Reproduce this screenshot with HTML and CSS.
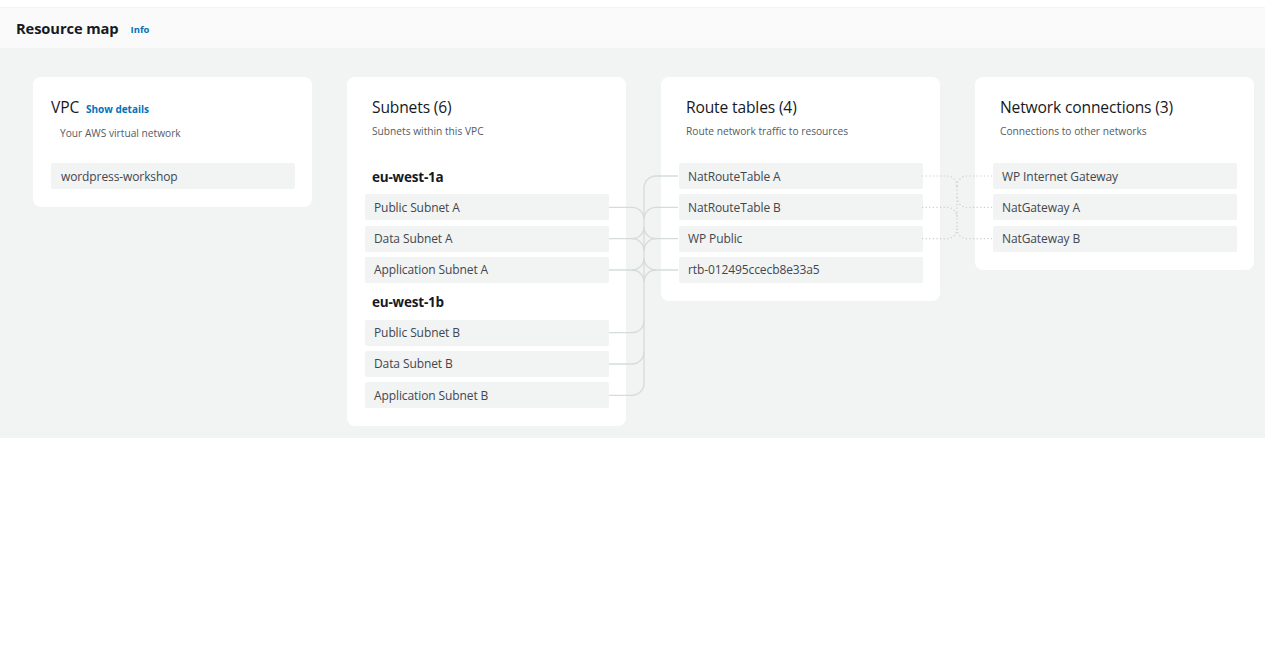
FILE: index.html
```html
<!DOCTYPE html>
<html lang="en">
<head>
<meta charset="utf-8">
<title>Resource map</title>
<link rel="stylesheet" href="styles.css">
</head>
<body>
<div class="top-strip"></div>
<header class="map-header">
  <h2 class="map-title">Resource map</h2>
  <a class="info-link" href="#">Info</a>
</header>
<section class="map">
  <div class="card card-vpc">
    <div class="card-head head-vpc">
      <div class="card-title">VPC <a class="details-link" href="#">Show details</a></div>
      <div class="card-sub">Your AWS virtual network</div>
    </div>
    <ul class="rows">
      <li class="row row-vpc">wordpress-workshop</li>
    </ul>
  </div>

  <div class="card">
    <div class="card-head">
      <div class="card-title">Subnets (6)</div>
      <div class="card-sub">Subnets within this VPC</div>
    </div>
    <ul class="rows">
      <li class="zone">eu-west-1a</li>
      <li class="row">Public Subnet A</li>
      <li class="row">Data Subnet A</li>
      <li class="row">Application Subnet A</li>
      <li class="zone">eu-west-1b</li>
      <li class="row">Public Subnet B</li>
      <li class="row">Data Subnet B</li>
      <li class="row">Application Subnet B</li>
    </ul>
  </div>

  <div class="card">
    <div class="card-head">
      <div class="card-title">Route tables (4)</div>
      <div class="card-sub">Route network traffic to resources</div>
    </div>
    <ul class="rows">
      <li class="row">NatRouteTable A</li>
      <li class="row">NatRouteTable B</li>
      <li class="row">WP Public</li>
      <li class="row">rtb-012495ccecb8e33a5</li>
    </ul>
  </div>

  <div class="card">
    <div class="card-head">
      <div class="card-title">Network connections (3)</div>
      <div class="card-sub">Connections to other networks</div>
    </div>
    <ul class="rows">
      <li class="row">WP Internet Gateway</li>
      <li class="row">NatGateway A</li>
      <li class="row">NatGateway B</li>
    </ul>
  </div>

  <svg class="links" width="1265" height="390" viewBox="0 0 1265 390" aria-hidden="true">
    <g class="solid">
      <path d="M644 140 V335.3"/>
      <path d="M644 140 A12 12 0 0 1 656 128 H678"/>
      <path d="M644 171.3 A12 12 0 0 1 656 159.3 H678"/>
      <path d="M609 159.3 H632 A12 12 0 0 1 644 171.3"/>
      <path d="M644 178.7 A12 12 0 0 0 656 190.7 H678"/>
      <path d="M644 202.7 A12 12 0 0 1 656 190.7"/>
      <path d="M609 190.7 H632 A12 12 0 0 1 644 202.7"/>
      <path d="M632 190.7 A12 12 0 0 0 644 178.7"/>
      <path d="M644 210 A12 12 0 0 0 656 222 H678"/>
      <path d="M644 234 A12 12 0 0 1 656 222"/>
      <path d="M609 222 H632 A12 12 0 0 0 644 210"/>
      <path d="M632 222 A12 12 0 0 1 644 234"/>
      <path d="M609 284.7 H632 A12 12 0 0 0 644 272.7"/>
      <path d="M609 316 H632 A12 12 0 0 0 644 304"/>
      <path d="M609 347.3 H632 A12 12 0 0 0 644 335.3"/>
    </g>
    <g class="dotted">
      <path d="M957 138 V180.7"/>
      <path d="M922 128 H947 A10 10 0 0 1 957 138"/>
      <path d="M957 138 A10 10 0 0 1 967 128 H992"/>
      <path d="M922 159.3 H947 A10 10 0 0 1 957 169.3"/>
      <path d="M957 149.3 A10 10 0 0 0 967 159.3 H992"/>
      <path d="M922 190.7 H947 A10 10 0 0 0 957 180.7"/>
      <path d="M957 180.7 A10 10 0 0 0 967 190.7 H992"/>
    </g>
  </svg>
</section>
</body>
</html>
```

FILE: styles.css
```css
* { box-sizing: border-box; }

html, body {
  margin: 0;
  padding: 0;
  background: #ffffff;
  font-family: "Open Sans", "Noto Sans", Arial, sans-serif;
  color: #16191f;
}

.top-strip {
  height: 7px;
  background: #ffffff;
}

.map-header {
  height: 41px;
  background: #fafafa;
  border-top: 1px solid #f3f4f4;
  display: flex;
  align-items: center;
  padding: 0 0 0 16px;
  gap: 12px;
}

.map-title {
  margin: 0;
  font-size: 14.7px;
  font-weight: 700;
  letter-spacing: -0.1px;
  color: #16191f;
}

.info-link {
  font-size: 9.5px;
  font-weight: 700;
  color: #0073bb;
  text-decoration: none;
  margin-top: 2px;
}

.map {
  position: relative;
  height: 390px;
  background: #f2f3f3;
  display: flex;
  align-items: flex-start;
  gap: 35px;
  padding: 29px 0 0 33px;
}

.card {
  width: 279px;
  background: #ffffff;
  border-radius: 8px;
  padding: 20px 17px 18px 18px;
}

.card-head {
  padding-left: 7px;
  height: 66px;
}

.head-vpc {
  padding-left: 0;
}

.head-vpc .card-sub {
  padding-left: 9px;
}

.card-title {
  font-size: 15.6px;
  line-height: 20px;
  color: #16191f;
  letter-spacing: -0.15px;
}

.details-link {
  font-size: 10px;
  font-weight: 700;
  color: #0073bb;
  text-decoration: none;
  margin-left: 3px;
  letter-spacing: 0;
}

.card-sub {
  margin-top: 7px;
  font-size: 10.2px;
  line-height: 14px;
  color: #545b64;
  letter-spacing: 0;
}

.rows {
  list-style: none;
  margin: 0;
  padding: 0;
  display: flex;
  flex-direction: column;
  gap: 5.33px;
}

.row {
  height: 26px;
  background: #f2f3f3;
  border-radius: 2px;
  padding-left: 9px;
  display: flex;
  align-items: center;
  font-size: 12px;
  color: #414750;
  letter-spacing: -0.1px;
}

.row-vpc {
  padding-left: 10px;
}

.zone {
  height: 26px;
  display: flex;
  align-items: center;
  padding-left: 7px;
  padding-top: 2px;
  font-size: 13.5px;
  font-weight: 700;
  color: #16191f;
  letter-spacing: -0.2px;
}

.links {
  position: absolute;
  left: 0;
  top: 0;
  pointer-events: none;
}

.links path {
  fill: none;
}

.solid path {
  stroke: #d5dbdb;
  stroke-width: 1.3;
}

.dotted path {
  stroke: #c9cdd1;
  stroke-width: 1.2;
  stroke-dasharray: 1.2 2.4;
}
```
